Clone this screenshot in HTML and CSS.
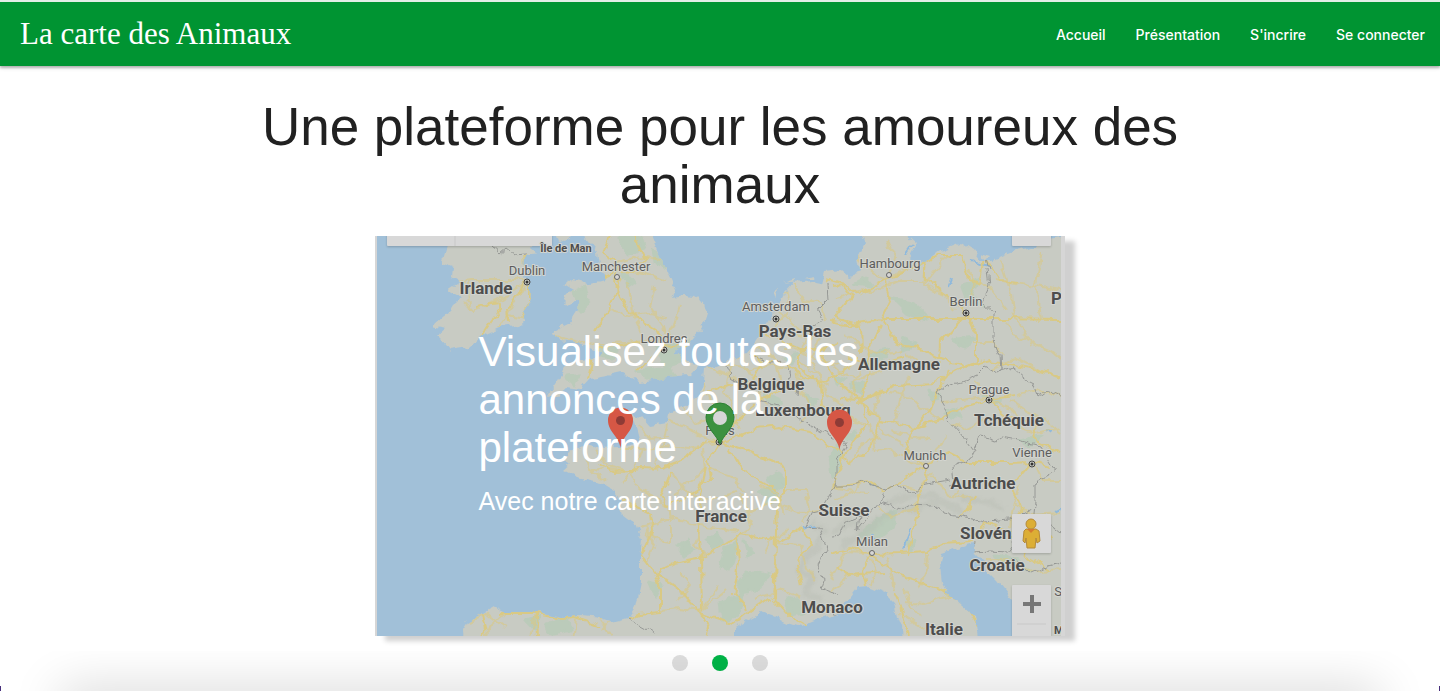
FILE: index.html
```html
<!DOCTYPE html>
<html lang="fr">
<head>
<meta charset="utf-8">
<meta name="viewport" content="width=device-width, initial-scale=1">
<title>La carte des Animaux</title>
<link rel="stylesheet" href="styles.css">
</head>
<body>
<header class="navbar">
  <a class="brand" href="#">La carte des Animaux</a>
  <nav class="nav-links">
    <a href="#">Accueil</a>
    <a href="#">Présentation</a>
    <a href="#">S'incrire</a>
    <a href="#">Se connecter</a>
  </nav>
</header>
<main class="content">
  <h1 class="title">Une plateforme pour les amoureux des animaux</h1>
  <section class="slider" aria-label="Diaporama">
    <div class="slide">
      <svg class="map" viewBox="375 236 690 400" preserveAspectRatio="xMidYMid slice" aria-hidden="true">
        <defs>
          <filter id="rough" x="0" y="0" width="100%" height="100%">
            <feTurbulence type="fractalNoise" baseFrequency="0.09" numOctaves="3" seed="4"/>
            <feDisplacementMap in="SourceGraphic" scale="9" xChannelSelector="R" yChannelSelector="G"/>
          </filter>
          <filter id="soft" x="-20%" y="-20%" width="140%" height="140%"><feGaussianBlur stdDeviation="1.5"/></filter>
          <clipPath id="frame"><rect x="377" y="236" width="684" height="400"/></clipPath>
          <clipPath id="land">
            <path id="ireland" d="M447 230L447 246 442 263 453 267 452 277 460 282 448 290 462 298 453 305 450 310 433 325 445 328 437 335 442 340 450 350 470 347 480 338 503 327 525 323 522 317 530 303 531 287 523 277 525 255 537 252 530 246 540 230Z"/>
            <path id="britain" d="M585 230L590 244 597 253 600 270 605 280 590 284 572 279 564 284 574 290 562 302 570 306 580 298 578 310 570 323 550 333 560 341 578 343 593 350 605 351 598 358 581 360 567 364 563 373 547 397 557 395 566 388 580 390 590 379 608 376 622 373 640 382 667 377 690 375 700 364 684 360 675 352 688 345 701 330 706 314 703 302 695 297 682 296 672 298 676 290 667 270 660 257 649 230Z"/>
            <path id="continent" d="M860 230L865 243 858 256 860 273 850 276 843 270 825 272 822 283 812 281 793 283 787 290 777 308 767 323 757 338 747 353 725 362 704 370 702 393 683 407 668 413 667 422 650 425 643 417 632 415 636 428 640 443 620 447 600 448 590 445 570 450 564 461 571 463 563 470 577 477 600 482 613 490 622 500 618 510 635 523 642 540 640 560 640 582 635 607 628 618 613 622 600 618 583 616 563 617 537 612 503 612 493 607 483 613 467 622 462 630 463 645 735 645 735 628 747 620 760 613 773 617 787 623 800 627 817 620 833 617 843 608 850 597 857 588 870 587 885 593 895 603 898 617 902 627 903 645 979 645 975 617 963 607 947 593 942 583 940 563 942 553 957 548 973 543 975 555 983 563 990 573 997 580 1007 593 1020 612 1040 645 1070 645 1070 236 1050 240 1030 248 1010 252 992 260 980 260 973 250 960 242 940 250 925 262 908 260 917 243 903 230Z"/>
          </clipPath>
        </defs>
        <rect class="frame" x="375" y="236" width="690" height="400"/>
        <g clip-path="url(#frame)">
          <rect class="sea" x="370" y="230" width="700" height="410"/>
          <g filter="url(#rough)">
            <use href="#ireland" class="land"/>
            <use href="#britain" class="land"/>
            <use href="#continent" class="land"/>
            <path class="land" d="M774 291L778 288 776 298ZM784 283L796 279 797 281ZM803 279L816 277 815 279ZM980 253L990 256 986 260ZM554 232L558 244 566 241 571 232Z"/>
            <g clip-path="url(#land)">
              <g class="forest">
                <path d="M574 292L585 286 588 300 580 311ZM618 238L640 236 645 248 628 254ZM622 275L635 281 628 286ZM655 345L690 340 696 356 665 366ZM600 346L616 351 612 358 600 356ZM638 372L670 368 676 376 650 379ZM566 377L580 375 574 385ZM652 250L662 256 664 268 654 262Z"/>
                <path d="M768 478L777 471 784 484 774 492ZM760 490L772 487 780 498 768 503ZM678 545L687 539 694 549 684 556ZM706 540L717 535 722 544 712 549ZM726 548L738 541 730 570 720 566ZM738 582L752 570 770 575 758 590 740 593ZM720 603L742 595 738 615 722 620ZM785 598L798 600 804 611 790 614ZM650 583L662 586 656 597ZM745 542L754 552 749 557ZM830 455L837 446 842 464 832 478Z"/>
                <path d="M855 283L866 278 872 285ZM890 297L918 305 927 321 906 313ZM960 286L978 280 972 295 984 305 966 302ZM903 339L915 345 905 350ZM952 340L974 337 964 347ZM870 353L890 350 882 360ZM850 388L864 382 862 392ZM928 390L940 396 934 403ZM945 413L956 408 960 419ZM845 436L855 431 852 442ZM985 395L1002 400 995 406ZM1020 440L1040 436 1030 446ZM860 535L880 518 896 510 892 527 870 545ZM905 542L915 540 912 550ZM996 556L1018 560 1030 572 1010 568ZM546 624L566 618 570 630 552 634ZM526 620L538 617 535 630Z"/>
                <path d="M765 395L782 402 774 412ZM805 395L818 400 810 408ZM784 358L798 355 792 364ZM835 375L845 380 838 386Z"/>
              </g>
              <g class="relief" filter="url(#soft)">
                <path d="M812 523L825 530 817 546 808 555 800 570 812 577 805 594 822 600M833 535L848 520 862 527 858 537 878 520 895 512M887 504L905 496 928 495 950 505 963 514M841 545L857 538 876 526M897 510L918 508 938 502M960 498L990 503 1005 508"/>
              </g>
              <g class="rivers">
                <path d="M868 482L878 487M903 551L906 540 910 530M803 529L815 524M1055 512L1064 508M873 534L875 539M949 286L952 278M905 256L912 246M970 262L992 266M1047 430L1050 434M750 288L752 293"/>
              </g>
              <g class="roads minor">
                <path d="M465 302L472 310 500 300 524 284M468 280L469 310M440 285L470 280 500 280 526 280M500 328L508 315 525 318M528 284L515 300 507 315M555 337L578 343 600 344 625 342 646 340M627 283L632 310 642 334M655 287L650 305 664 325 667 345M680 306L674 325 664 347M617 263L640 256 661 260M603 254L625 270 645 273 666 281M609 309L625 316 651 313 668 319"/>
                <path d="M704 367L730 377 750 385 776 390M730 367L726 390 734 412 740 430M725 364L750 370 770 365 796 370M755 345L776 360 782 382 802 395M739 356L752 378 765 405M779 312L792 321 807 335 801 351M793 285L803 300 819 302 826 320M786 290L790 310 775 325M764 336L790 333 808 338 826 330M786 350L801 351 818 361 840 364M800 360L819 376 826 395 844 404M819 337L811 360 826 386M796 370L802 392 810 407 800 425"/>
                <path d="M620 448L641 448 665 446 690 448 719 442M668 421L688 429 705 437 719 441M703 383L712 403 719 441M684 408L696 424 705 420M639 425L650 440 670 438M641 448L635 467 621 483M595 450L608 465 628 471 640 489M585 456L590 472 606 481M590 472L606 468 624 472M655 470L662 450 667 424M705 469L702 449M705 469L683 489 673 495M709 468L735 478 742 492M671 470L683 489 706 500 736 492M640 489L655 496 669 508 671 522M645 528L657 541 671 543 671 524M639 529L673 518 700 526 737 532M700 530L695 544 704 556M740 494L750 512 764 507 779 497M760 484L779 496 785 515M784 490L806 490 810 508 802 523M780 506L800 514 824 510M790 528L770 543 765 554M746 506L753 525 740 535M776 543L801 545 806 565 815 580M719 585L700 611 726 590M655 573L675 586 694 607M661 610L680 608 700 611M602 628L614 616 630 613M680 572L690 585 678 600M755 599L780 589 800 598"/>
                <path d="M844 406L855 422 870 426 876 450M845 335L863 348 883 354 904 350M863 358L858 378 850 398M830 362L843 374 859 378 882 372M880 390L875 411 884 433 904 445M889 393L912 398 925 411 944 420M910 377L900 400 894 425M907 354L920 364 940 363M836 298L858 292 885 288 903 280M847 245L865 265 883 281M916 263L904 270 889 277M887 241L895 257 889 275M925 263L923 285 945 295 955 310M896 282L925 282 948 255M979 283L990 288 1006 309M1000 260L1010 290 1014 316 1031 345M995 280L1030 285 1061 290M1042 250L1036 284 1040 320M1005 321L1015 335 1050 350 1061 360M968 270L975 286 969 304M990 370L1015 358 1044 372 1061 378M972 342L994 342 1003 355M942 402L970 399 994 396M988 400L1010 408 1023 423M990 400L980 386 975 380M1017 397L1040 390 1061 397M1010 400L1026 411 1046 420 1061 433M951 424L965 429 990 416M1015 425L1035 433 1061 428"/>
                <path d="M877 450L890 448 910 463 926 465M878 437L861 444 851 464M893 431L913 438 930 437M946 435L939 450 929 461M932 475L950 495 971 497M932 472L917 490 900 485M952 495L970 485 990 482 1013 486M1020 485L1013 506 1010 527M1034 465L1041 480 1061 480M1013 503L1030 515 1061 513M878 506L890 518 920 507M867 556L876 570 870 585M830 592L847 576 865 573M887 557L890 573 893 590M926 553L927 568 919 588M904 590L912 607 920 617M949 596L925 604 905 602M904 617L926 630 941 634M985 560L1008 560 1031 572 1061 569M835 500L856 492 862 482M831 487L846 491 869 493M831 580L845 552 866 553"/>
                <path d="M469 622L486 613 506 629M505 612L490 626 485 640M576 619L573 640M600 618L612 636M535 612L530 638M645 530L654 544 648 565"/>
              </g>
              <g class="roads">
                <path d="M524 254L526 278 519 294 507 309 509 322M530 284L530 304 522 317M480 338L488 326 500 309 500 303 475 306M611 230L604 255 617 263 615 286 626 308 639 319 657 331 664 347 678 345 704 354M635 236L645 258 631 273 616 272 592 282M589 363L599 348 620 345 645 341 664 343M664 348L652 356 639 370M594 351L588 379M621 278L609 309 596 332"/>
                <path d="M702 394L719 388 752 381 763 363 750 352M719 441L736 422 758 402 779 390 801 380M719 441L750 453 780 463 785 472 785 492 777 509 776 530 775 600M719 441L708 441 678 462 661 468 640 467 629 470M671 470L662 496 669 507 700 487 711 480 708 460 719 442M722 442L757 429 778 426 810 432 835 449M730 449L741 469 765 484 781 494M633 471L613 472 600 464M655 573L673 564 703 558 740 534 780 541 800 529M655 573L661 592 661 612 637 614 628 618M655 573L641 555 653 530 651 514 622 500M656 574L680 590 699 612 735 624 747 614 771 597M706 469L700 495 698 530 701 560 702 610M736 535L739 559 737 575 734 594 744 604 746 612M776 545L773 597 790 616 806 625M801 529L812 545 797 560 802 585M699 612L708 628 705 640"/>
                <path d="M762 333L779 340 799 350 821 350 840 343M799 350L799 368 821 385 823 407 839 411M826 279L843 284 852 297 835 318 860 325 861 354M819 350L826 364 839 384 859 399 869 423 846 449 833 490M764 361L786 364 802 377 826 382 848 365 858 356"/>
                <path d="M832 286L846 285 858 295 884 280 898 275 925 262 938 255 962 255 968 279 980 285M884 280L890 299 881 318 889 329 898 344 923 350 938 358 966 367M830 321L848 325 881 319 920 319 963 319 1001 319 1061 320M939 359L940 342 966 315 950 298 924 279 924 258M980 285L985 257 1000 280 1020 282M966 313L976 333 976 362 955 371 933 383 898 385 884 391 859 402 880 420 915 427 930 412 949 369M966 367L990 360 1040 370 1061 378M846 358L875 365 905 357M859 401L868 380 870 350 881 325M915 425L905 450 925 466M915 427L940 419 961 408 987 400 1015 396M988 401L1008 417 1033 422 1035 440 1061 453M840 398L860 399 882 390"/>
                <path d="M835 449L851 463 870 450 880 422M835 487L870 482 884 491 924 467 950 453 969 463 1010 463 1033 462 1049 466M924 467L927 480 917 494 918 512 908 555M830 553L850 548 872 554 900 553 926 551 945 543 970 541M872 554L863 570 866 587M870 556L901 575 943 590 967 608 977 625M837 566L850 575 885 572M894 592L900 605 903 620 909 635M970 541L985 523 1015 532M958 517L970 507 974 495M1009 540L1028 530 1052 540M1030 463L1012 485 1022 510 1014 530 1025 555 1050 570"/>
                <path d="M483 614L486 630 480 640M500 613L536 613 563 618 575 617 600 626M536 614L537 640"/>
              </g>
              <path class="borders" d="M491 246L500 254 507 248 515 254 525 253M826 283L827 300 817 310 823 320 811 327M725 365L731 378 743 386 757 386 761 402 782 405 800 420 820 431 845 442M750 355L770 363 786 362 791 380 799 386 798 397M845 443L836 465 836 485 830 495 821 511 812 513 805 527 819 526 823 539 827 549 817 565 824 580 821 589 838 595M836 486L851 486 864 482 872 485 886 489 880 502 893 506 904 510 912 505 931 506 938 505 943 514 962 517 985 522 1010 520 1031 509M886 490L895 484 912 493 921 485 950 480M880 503L870 515 858 530 860 516 845 522 839 537 830 538M990 270L987 258M987 269L989 286 982 302 994 313 994 340 1000 355 1001 370 996 373 985 367 977 375 961 382 946 386 938 393 945 405 948 420 961 434 973 450 979 437 997 441 1003 437 1019 440 1040 446 1056 471M999 372L1013 368 1026 379 1032 382 1037 396 1045 390 1061 397M975 449L970 459 952 467 954 483 947 485M1056 471L1035 484 1035 500 1034 515M974 542L972 552 990 551 1007 552 1015 541M1013 558L1030 574 1050 565 1061 562M628 618L640 625 654 633 660 640M1051 525L1061 533M835 617L828 604"/>
            </g>
          </g>
          <g class="control">
            <rect x="387" y="230" width="165" height="16" rx="1"/>
            <rect x="1012" y="230" width="39" height="16" rx="1"/>
          </g>
          <path class="divider" d="M455 236V246"/>
          <g class="dots">
            <circle cx="527" cy="282" r="3"/><circle cx="664" cy="350" r="3"/><circle cx="776" cy="319" r="3"/><circle cx="966" cy="313" r="3"/><circle cx="989" cy="400" r="3"/><circle cx="1032" cy="464" r="3"/><circle cx="719" cy="442" r="3"/>
          </g>
          <g class="dots-core">
            <circle cx="527" cy="282" r="1.5"/><circle cx="664" cy="350" r="1.5"/><circle cx="776" cy="319" r="1.5"/><circle cx="966" cy="313" r="1.5"/><circle cx="989" cy="400" r="1.5"/><circle cx="1032" cy="464" r="1.5"/><circle cx="719" cy="442" r="1.5"/>
          </g>
          <g class="rings">
            <circle cx="617" cy="277" r="2.5"/><circle cx="889" cy="275" r="2.5"/><circle cx="926" cy="466" r="2.5"/><circle cx="872" cy="553" r="2.5"/>
          </g>
          <g class="city">
            <text x="527" y="275">Dublin</text><text x="616" y="271">Manchester</text><text x="664" y="343">Londres</text><text x="776" y="311">Amsterdam</text><text x="890" y="268">Hambourg</text><text x="966" y="306">Berlin</text><text x="989" y="394">Prague</text><text x="925" y="460">Munich</text><text x="1032" y="457">Vienne</text><text x="872" y="546">Milan</text><text x="720" y="435">Paris</text><text x="1058" y="596">S</text>
          </g>
          <g class="country">
            <text class="small" x="566" y="252">Île de Man</text><text x="486" y="294">Irlande</text><text x="795" y="337">Pays-Bas</text><text x="771" y="390">Belgique</text><text x="803" y="416">Luxembourg</text><text x="899" y="370">Allemagne</text><text x="1009" y="426">Tchéquie</text><text x="983" y="489">Autriche</text><text x="721" y="522">France</text><text x="844" y="516">Suisse</text><text class="start" x="960" y="539">Slovén</text><text x="997" y="571">Croatie</text><text x="832" y="613">Monaco</text><text x="944" y="635">Italie</text><text class="start" x="1051" y="304">P</text><text class="small start" x="1054" y="634">M</text>
          </g>
          <g class="control">
            <rect x="1012" y="514" width="39" height="39" rx="1"/>
            <rect x="1012" y="585" width="39" height="60" rx="1"/>
          </g>
          <path class="divider" d="M1017 624H1046"/>
          <path class="plus" d="M1023 604H1041M1032 595V613"/>
          <g class="pegman">
            <path d="M1026 529H1036L1039 531 1040 541 1037 543 1036 538 1035 548H1027L1026 538 1025 543 1023 541 1024 531Z"/>
            <circle cx="1031" cy="524" r="5"/>
            <path class="scarf" d="M1027 529H1035L1031 533Z"/>
          </g>
          <g class="pin">
            <path d="M620.500 448C619 436 608 432 608 420A12.500 12.500 0 0 1 633 420C633 432 622 436 620.500 448Z"/>
            <path d="M839.500 450C838 438 827 434 827 422A12.500 12.500 0 0 1 852 422C852 434 841 438 839.500 450Z"/>
            <circle cx="620.500" cy="420.500" r="4.500"/><circle cx="839.500" cy="422.500" r="4.500"/>
          </g>
          <path class="pin-home" d="M720 444C716 434 706 428 706 417A14 14 0 0 1 734 417C734 428 724 434 720 444Z"/>
          <circle class="pin-hole" cx="720" cy="418" r="7"/>
        </g>
      </svg>
      <div class="caption">
        <h2>Visualisez toutes les annonces de la plateforme</h2>
        <p>Avec notre carte interactive</p>
      </div>
    </div>
    <div class="indicators">
      <button type="button" aria-label="Image 1"></button>
      <button type="button" class="active" aria-label="Image 2"></button>
      <button type="button" aria-label="Image 3"></button>
    </div>
  </section>
</main>
<div class="page-fade"></div>
</body>
</html>
```
FILE: styles.css
```css
* { box-sizing: border-box; }
body {
  margin: 0;
  min-height: 100vh;
  background: #fff;
  color: #212121;
  font-family: "Liberation Sans", Arial, sans-serif;
  overflow: hidden;
}
.navbar {
  display: flex;
  align-items: center;
  justify-content: space-between;
  height: 66px;
  padding-left: 20px;
  background: #009432;
  border-top: 2px solid #e3eee6;
  box-shadow: 0 2px 2px rgba(0, 0, 0, .2), 0 1px 5px rgba(0, 0, 0, .2);
}
.navbar a { color: #fff; text-decoration: none; }
.brand { font: 31px/64px "Liberation Serif", "Times New Roman", serif; }
.nav-links { display: flex; }
.nav-links a {
  padding: 2px 15px 0;
  font: 500 14px/64px Inter, sans-serif;
}
.content { padding: 32px 0 0; }
.title {
  width: 70%;
  margin: 0 auto 22px;
  font-size: 53px;
  line-height: 58px;
  font-weight: 400;
  text-align: center;
}
.slider { width: 690px; max-width: 100%; margin: 0 auto; }
.slide {
  position: relative;
  height: 400px;
  box-shadow: 10px 5px 5px #d0d0d0;
}
.map { display: block; width: 100%; height: 100%; }
.caption {
  position: absolute;
  top: 23%;
  left: 15%;
  width: 60%;
  color: #fff;
}
.caption h2 { margin: 0 0 15px; font-size: 42px; line-height: 48px; font-weight: 400; }
.caption p { margin: 0; font-size: 25px; line-height: 28px; }
.indicators { display: flex; justify-content: center; gap: 24px; padding-top: 19px; }
.indicators button {
  width: 16px;
  height: 16px;
  padding: 0;
  border: 0;
  border-radius: 50%;
  background: #dedede;
}
.indicators .active { background: #00b548; }
.page-fade {
  position: fixed;
  inset: auto 0 0;
  height: 40px;
  overflow: hidden;
  pointer-events: none;
}
.page-fade::after {
  content: "";
  position: absolute;
  inset: 100% 60px auto;
  height: 30px;
  box-shadow: 0 0 50px rgba(0, 0, 0, .2);
}
.page-fade::before {
  content: "";
  position: absolute;
  inset: auto 0 0;
  height: 5px;
  border: solid #48307c;
  border-width: 0 1px;
}

.frame { fill: #d6d6d6; }
.sea { fill: #a1c0d8; }
.land { fill: #c8cbc3; }
.forest { fill: #b8cbb8; stroke: #b8cbb8; stroke-width: 3; stroke-linejoin: round; opacity: .8; }
.relief { fill: none; stroke: #b3b8ae; stroke-width: 6; opacity: .3; }
.rivers { fill: none; stroke: #8fb9dc; stroke-width: 2; }
.roads { fill: none; stroke: #d9c984; stroke-width: 2; stroke-linejoin: round; }
.roads.minor { opacity: .6; }
.borders { fill: none; stroke: #969895; stroke-width: 1; stroke-linejoin: round; }
.dots { fill: #c8cbc3; stroke: #444; stroke-width: 1; }
.dots-core { fill: #333; }
.rings { fill: #d6d6d6; stroke: #666; stroke-width: 1; }
.city, .country {
  font-family: Roboto, sans-serif;
  text-anchor: middle;
  paint-order: stroke;
  stroke: #d3d5d0;
  stroke-width: 2px;
  stroke-linejoin: round;
}
.city { font-size: 13px; fill: #5d5d5d; }
.country { font-size: 17px; font-weight: 700; fill: #4d4d4d; }
.country .small { font-size: 11px; }
.country .start { text-anchor: start; }
.control { fill: #d8d8d8; filter: drop-shadow(0 1px 1px rgba(0, 0, 0, .2)); }
.divider { stroke: #c8c8c8; stroke-width: 1; }
.plus { stroke: #777; stroke-width: 4; }
.pegman { fill: #dcae35; stroke: #b48a3a; stroke-width: 1; }
.pegman .scarf { fill: #d47a30; stroke: none; }
.pin path { fill: #d65745; }
.pin circle { fill: #8e3b36; }
.pin-home { fill: #3c9140; stroke: #2e8034; stroke-width: 1; }
.pin-hole { fill: #d6d6d6; }
```
